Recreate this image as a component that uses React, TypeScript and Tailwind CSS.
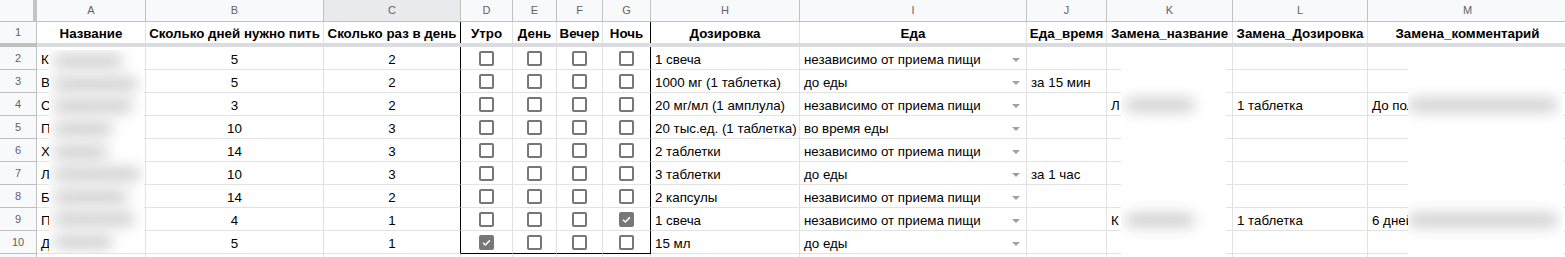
import React from "react";

type Row = {
  n: number;
  a: string;
  b: string;
  c: string;
  checks: boolean[];
  h: string;
  i: string;
  j: string;
  k: string;
  l: string;
  m: string;
};

const rows: Row[] = [
  { n: 2, a: "К", b: "5", c: "2", checks: [false, false, false, false], h: "1 свеча", i: "независимо от приема пищи", j: "", k: "", l: "", m: "" },
  { n: 3, a: "В", b: "5", c: "2", checks: [false, false, false, false], h: "1000 мг (1 таблетка)", i: "до еды", j: "за 15 мин", k: "", l: "", m: "" },
  { n: 4, a: "С", b: "3", c: "2", checks: [false, false, false, false], h: "20 мг/мл (1 амплула)", i: "независимо от приема пищи", j: "", k: "Л", l: "1 таблетка", m: "До пол" },
  { n: 5, a: "П", b: "10", c: "3", checks: [false, false, false, false], h: "20 тыс.ед. (1 таблетка)", i: "во время еды", j: "", k: "", l: "", m: "" },
  { n: 6, a: "Х", b: "14", c: "3", checks: [false, false, false, false], h: "2 таблетки", i: "независимо от приема пищи", j: "", k: "", l: "", m: "" },
  { n: 7, a: "Л", b: "10", c: "3", checks: [false, false, false, false], h: "3 таблетки", i: "до еды", j: "за 1 час", k: "", l: "", m: "" },
  { n: 8, a: "Б", b: "14", c: "2", checks: [false, false, false, false], h: "2 капсулы", i: "независимо от приема пищи", j: "", k: "", l: "", m: "" },
  { n: 9, a: "П", b: "4", c: "1", checks: [false, false, false, true], h: "1 свеча", i: "независимо от приема пищи", j: "", k: "К", l: "1 таблетка", m: "6 дней" },
  { n: 10, a: "Д", b: "5", c: "1", checks: [true, false, false, false], h: "15 мл", i: "до еды", j: "", k: "", l: "", m: "" },
];

const letters = ["A", "B", "C", "D", "E", "F", "G", "H", "I", "J", "K", "L", "M"];
const widths = [
  "w-[109px]",
  "w-[178px]",
  "w-[137px]",
  "w-[52px]",
  "w-[44px]",
  "w-[46px]",
  "w-[48px]",
  "w-[149px]",
  "w-[227px]",
  "w-[80px]",
  "w-[126px]",
  "w-[135px]",
  "w-[200px]",
];

const titles = [
  "Название",
  "Сколько дней нужно пить",
  "Сколько раз в день",
  "Утро",
  "День",
  "Вечер",
  "Ночь",
  "Дозировка",
  "Еда",
  "Еда_время",
  "Замена_название",
  "Замена_Дозировка",
  "Замена_комментарий",
];

// right border: black after C and after G
const rightBorder = (i: number) =>
  i === 2 || i === 6 ? "border-r-black" : "border-r-[#e2e2e2]";

const Checkbox: React.FC<{ checked: boolean }> = ({ checked }) =>
  checked ? (
    <div className="w-[15px] h-[15px] rounded-[2px] bg-[#777] flex items-center justify-center">
      <svg width="11" height="11" viewBox="0 0 12 12">
        <path d="M2.2 6.3l2.5 2.4 5-5" fill="none" stroke="#fff" strokeWidth="1.6" />
      </svg>
    </div>
  ) : (
    <div className="w-[15px] h-[15px] rounded-[2px] border-2 border-[#777]" />
  );

const Blob: React.FC<{ w: string }> = ({ w }) => (
  <div className={`h-[14px] ${w} bg-[#cfcfcf] rounded-full blur-[7px]`} />
);

export default function App() {
  return (
    <div className="relative h-[257px] w-[1565px] overflow-hidden bg-white font-['Liberation_Sans',Arial,sans-serif] text-[13.33px] text-black">
      {/* column letters */}
      <div className="flex h-[22px]">
        <div className="w-[37px] shrink-0 bg-[#f8f9fa] border-r-4 border-r-[#c4c4c4] border-b border-b-[#c0c0c0]" />
        {letters.map((l, i) => (
          <div
            key={l}
            className={`${widths[i]} shrink-0 flex items-center justify-center border-r border-b border-[#c0c0c0] text-[11px] text-[#5f6368] ${
              i === 2 ? "bg-[#e8eaed]" : "bg-[#f8f9fa]"
            }`}
          >
            {l}
          </div>
        ))}
      </div>

      {/* row 1 */}
      <div className="flex h-[21px]">
        <div className="w-[37px] shrink-0 bg-[#f8f9fa] border-r border-r-[#c0c0c0] flex items-center justify-center text-[11px] text-[#5f6368]">
          1
        </div>
        {titles.map((t, i) => (
          <div
            key={t}
            className={`${widths[i]} shrink-0 flex items-end justify-center pb-[1px] leading-[16px] font-bold whitespace-nowrap overflow-hidden border-r ${rightBorder(i)}`}
          >
            {t}
          </div>
        ))}
      </div>

      {/* freeze bar */}
      <div className="flex h-[4px]">
        <div className="w-[37px] shrink-0 bg-[#c0c0c0]" />
        <div className="flex-1 bg-[#dadce0]" />
      </div>

      {rows.map((r, ri) => {
        const last = ri === rows.length - 1;
        const cells = [r.a, r.b, r.c, "", "", "", "", r.h, r.i, r.j, r.k, r.l, r.m];
        return (
          <div key={r.n} className="flex h-[23px]">
            <div className="w-[37px] shrink-0 bg-[#f8f9fa] border-r border-b border-[#c0c0c0] flex items-center justify-center text-[11px] text-[#5f6368]">
              {r.n}
            </div>
            {cells.map((v, i) => {
              const isCheck = i >= 3 && i <= 6;
              const bottom = last && isCheck ? "border-b-black" : "border-b-[#e2e2e2]";
              const base = `${widths[i]} shrink-0 border-r border-b ${rightBorder(i)} ${bottom}`;
              if (isCheck) {
                return (
                  <div key={i} className={`${base} flex items-center justify-center pt-[1px]`}>
                    <Checkbox checked={r.checks[i - 3]} />
                  </div>
                );
              }
              if (i === 8) {
                return (
                  <div key={i} className={`${base} flex items-end justify-between pl-[4px] pr-[6px] pb-[1px] leading-[16px]`}>
                    <span className="whitespace-nowrap">{v}</span>
                    <span className="mb-[6px] w-0 h-0 border-x-[4px] border-x-transparent border-t-[4px] border-t-[#a0a0a0]" />
                  </div>
                );
              }
              const center = i === 1 || i === 2;
              return (
                <div
                  key={i}
                  className={`${base} flex items-end pb-[1px] leading-[16px] whitespace-nowrap ${
                    center ? "justify-center" : "pl-[4px]"
                  }`}
                >
                  {v}
                </div>
              );
            })}
          </div>
        );
      })}

      {/* row 11 */}
      <div className="flex h-[23px]">
        <div className="w-[37px] shrink-0 bg-[#f8f9fa] border-r border-[#c0c0c0]" />
        {widths.map((w, i) => (
          <div key={i} className={`${w} shrink-0 border-r border-r-[#e2e2e2]`} />
        ))}
      </div>

      {/* redacted areas */}
      <div className="absolute left-[49px] top-[50px] w-[95px] h-[203px] bg-white flex flex-col overflow-hidden">
        {["w-[70px]", "w-[85px]", "w-[80px]", "w-[60px]", "w-[55px]", "w-[88px]", "w-[75px]", "w-[82px]", "w-[60px]"].map((w, i) => (
          <div key={i} className="h-[23px] flex items-center pl-[4px]">
            <Blob w={w} />
          </div>
        ))}
      </div>
      <div className="absolute left-[1121px] top-[47px] w-[105px] h-[207px] bg-white flex flex-col overflow-hidden">
        {[false, false, true, false, false, false, false, true, false].map((b, i) => (
          <div key={i} className="h-[23px] flex items-center pl-[4px]">
            {b && <Blob w="w-[70px]" />}
          </div>
        ))}
      </div>
      <div className="absolute left-[1408px] top-[62px] w-[155px] h-[192px] bg-white flex flex-col overflow-hidden pt-[8px]">
        {[false, true, false, false, false, false, true, false].map((b, i) => (
          <div key={i} className="h-[23px] flex items-center">
            {b && <Blob w="w-[150px]" />}
          </div>
        ))}
      </div>
    </div>
  );
}
